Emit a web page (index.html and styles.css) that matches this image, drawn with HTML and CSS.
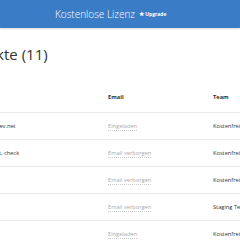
FILE: index.html
```html
<!doctype html>
<html>
<head>
<meta charset="utf-8">
<title>Kontakte</title>
<link rel="stylesheet" href="styles.css">
</head>
<body>
<!--Kopfzeile-->
<div class="topbar">
	<span class="plan">Kostenlose Lizenz</span>
	<a class="upgrade" href="#"><span class="star">&#9733;</span> Upgrade</a>
</div>

<div class="content">
	<h1 class="title">Kontakte (11)</h1>

	<div class="row head">
		<div class="cell">Name</div>
		<div class="cell">Email</div>
		<div class="cell">Team</div>
	</div>
	<div class="row">
		<div class="cell name">ana@stagingdev.net</div>
		<div class="cell"><span class="muted">Eingeladen</span></div>
		<div class="cell">Kostenfrei</div>
	</div>
	<div class="row">
		<div class="cell name">Sicherheitstest, check</div>
		<div class="cell"><span class="muted">Email verborgen</span></div>
		<div class="cell">Kostenfrei</div>
	</div>
	<div class="row">
		<div class="cell name">Tom</div>
		<div class="cell"><span class="muted">Email verborgen</span></div>
		<div class="cell">Kostenfrei</div>
	</div>
	<div class="row">
		<div class="cell name">Anna</div>
		<div class="cell"><span class="muted">Email verborgen</span></div>
		<div class="cell">Staging Team</div>
	</div>
	<div class="row">
		<div class="cell name">Paul</div>
		<div class="cell"><span class="muted">Eingeladen</span></div>
		<div class="cell">Kostenfrei</div>
	</div>
</div>
</body>
</html>
```

FILE: styles.css
```css
body{
	margin: 0;
	overflow: hidden;
	font-family: "Open Sans", "Liberation Sans", sans-serif;
	color: #333;
	background: #fff;
}

.topbar{
	height: 28px;
	background: #3b7cc7;
	box-shadow: 0 1px 2px rgba(0,0,0,.15);
	display: flex;
	align-items: center;
	padding-left: 55px;
	color: #fff;
}
.plan{
	font-size: 10px;
	font-weight: 300;
}
.upgrade{
	margin-left: 4px;
	font-size: 5px;
	font-weight: bold;
	color: #fff;
	text-decoration: none;
}
.star{
	font-size: 6px;
}

.content{
	margin-left: -38px;
	width: 300px;
}
.title{
	font-size: 15px;
	font-weight: normal;
	margin: 16px 0 0 -7px;
	line-height: 21px;
}

.row{
	display: grid;
	grid-template-columns: 146px 105px 60px;
	height: 26px;
	align-items: center;
	border-bottom: 1px solid #ebebeb;
	font-size: 5.7px;
}
.row.head{
	margin-top: 17px;
	height: 30px;
	font-weight: bold;
}
.row.head .cell:first-child{
	visibility: hidden;
}
.cell{
	white-space: nowrap;
}
.muted{
	color: #aaa;
	border-bottom: 1px dotted #ccc;
}
```
